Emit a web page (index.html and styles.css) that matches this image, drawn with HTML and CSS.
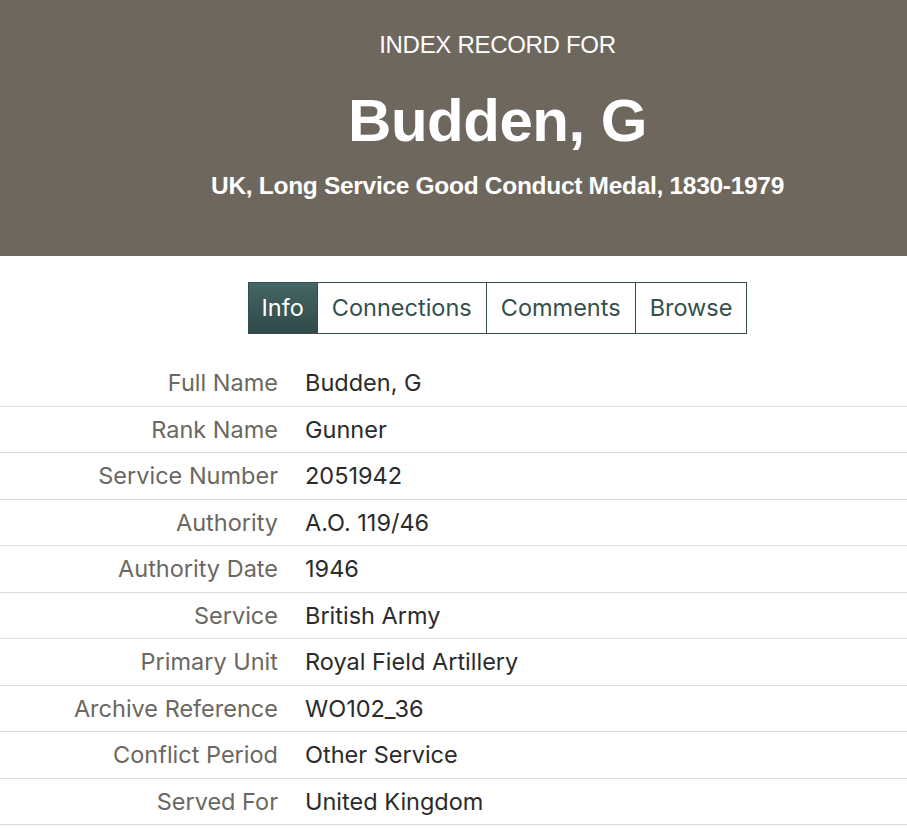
FILE: index.html
```html
<!DOCTYPE html>
<html lang="en">
<head>
    <meta charset="UTF-8">
    <title>Budden, G - Index Record</title>
    <link rel="stylesheet" href="styles.css">
</head>
<body>
    <header class="record-header">
        <div class="header-inner">
            <div class="kicker">INDEX RECORD FOR</div>
            <h1 class="record-name">Budden, G</h1>
            <div class="record-source">UK, Long Service Good Conduct Medal, 1830-1979</div>
        </div>
    </header>

    <nav class="tabs">
        <a class="tab active" href="#">Info</a>
        <a class="tab" href="#">Connections</a>
        <a class="tab" href="#">Comments</a>
        <a class="tab" href="#">Browse</a>
    </nav>

    <div class="record-table">
        <div class="row"><div class="label">Full Name</div><div class="value">Budden, G</div></div>
        <div class="row"><div class="label">Rank Name</div><div class="value">Gunner</div></div>
        <div class="row"><div class="label">Service Number</div><div class="value">2051942</div></div>
        <div class="row"><div class="label">Authority</div><div class="value">A.O. 119/46</div></div>
        <div class="row"><div class="label">Authority Date</div><div class="value">1946</div></div>
        <div class="row"><div class="label">Service</div><div class="value">British Army</div></div>
        <div class="row"><div class="label">Primary Unit</div><div class="value">Royal Field Artillery</div></div>
        <div class="row"><div class="label">Archive Reference</div><div class="value">WO102_36</div></div>
        <div class="row"><div class="label">Conflict Period</div><div class="value">Other Service</div></div>
        <div class="row"><div class="label">Served For</div><div class="value">United Kingdom</div></div>
    </div>
</body>
</html>
```

FILE: styles.css
```css
:root {
    --header-bg: #6e675d;
    --teal: #34504e;
    --label: #6b6761;
    --text: #2b2b2b;
    --line: #dcdcdc;
}

body {
    margin: 0;
    background: #fff;
    font-family: Inter, "Noto Sans", sans-serif;
    color: var(--text);
}

.record-header {
    background: var(--header-bg);
    color: #fff;
    height: 256px;
    box-sizing: border-box;
    padding: 30px 0 0 88px;
    text-align: center;
    font-family: "Liberation Sans", Arial, sans-serif;
}

.kicker {
    font-size: 24px;
    letter-spacing: -0.3px;
    line-height: 30px;
}

.record-name {
    margin: 28px 0 0;
    font-size: 60px;
    line-height: 66px;
    font-weight: bold;
    letter-spacing: -0.5px;
}

.record-source {
    margin-top: 18px;
    font-size: 24.5px;
    font-weight: bold;
    letter-spacing: -0.3px;
}

.tabs {
    display: flex;
    justify-content: center;
    padding: 26px 0 0 88px;
    margin-bottom: 26px;
}

.tab {
    display: block;
    height: 52px;
    line-height: 50px;
    box-sizing: border-box;
    padding: 0 14px;
    border: 1px solid var(--teal);
    border-left: none;
    color: var(--teal);
    font-size: 23.5px;
    text-decoration: none;
}

.tab:first-child {
    border-left: 1px solid var(--teal);
    padding: 0 13px;
}

.tab.active {
    background: linear-gradient(#456663, #2f4a48);
    color: #fff;
}

.row {
    display: grid;
    grid-template-columns: 278px 1fr;
    column-gap: 27px;
    height: 46.5px;
    line-height: 46px;
    border-bottom: 1px solid var(--line);
    box-sizing: border-box;
    font-size: 23.5px;
}

.label {
    text-align: right;
    color: var(--label);
}

.value {
    color: var(--text);
}
```
